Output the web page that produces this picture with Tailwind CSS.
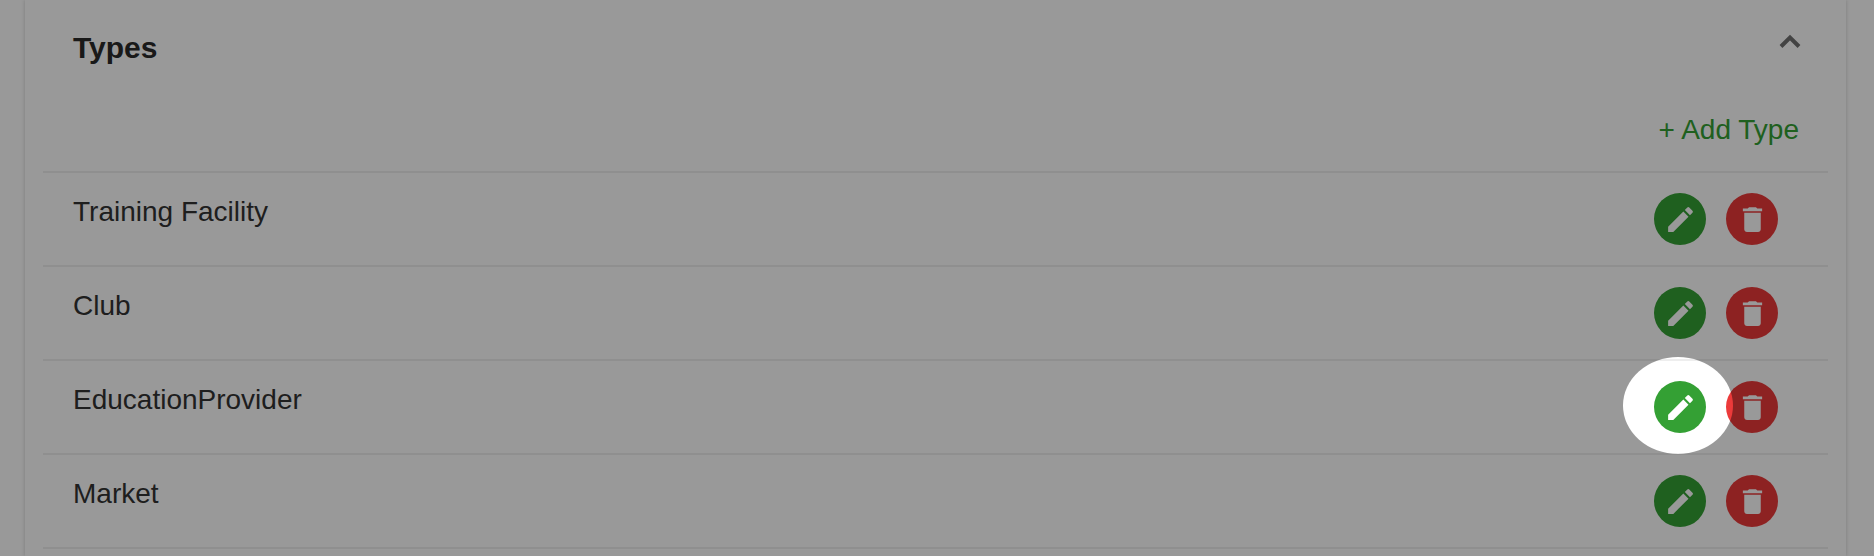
<!DOCTYPE html>
<html lang="en">

<head>
    <script src="https://cdn.jsdelivr.net/npm/@tailwindcss/browser@4"></script>
</head>

<body class="relative h-[556px] overflow-hidden bg-white font-['Liberation_Sans',sans-serif]">
    <div class="ml-[25px] mr-[28px] h-[556px] bg-white shadow-[0_0_4px_rgba(0,0,0,0.2)] pl-[18px] pr-[18px]">
        <div class="flex justify-between pl-[30px] pr-[27px] pt-[31px] h-[105px]">
            <h2 class="text-[30px] leading-[34px] font-bold text-[#2b2b2b]">Types</h2>
            <button class="h-[14px] mt-[3px] text-[#707070]">
                <svg class="block w-[22px] h-[14px]" viewBox="0 0 22 14" fill="none" stroke="currentColor" stroke-width="4"><path d="M2 12.5 11 3.5l9 9"/></svg>
            </button>
        </div>
        <div class="flex justify-end pr-[29px] h-[66px]">
            <a class="text-[#34a034] text-[28px] leading-[50px] h-[50px]">+ Add Type</a>
        </div>
        <div id="rows">
            <div class="flex justify-between h-[94px] border-t-2 border-[#eeeeee] pl-[30px] pr-[50px]">
                <span class="text-[28px] leading-[38px] pt-[20px] text-[#333]">Training Facility</span>
                <div class="flex gap-[20px] pt-[20px]">
                    <button class="w-[52px] h-[52px] rounded-full bg-[#34a034] flex items-center justify-center text-white">
                        <svg class="w-[33px] h-[33px]" viewBox="0 0 24 24" fill="currentColor"><path d="M3 17.25V21h3.75L17.81 9.94l-3.75-3.75L3 17.25zM20.71 7.04a1 1 0 0 0 0-1.41l-2.34-2.34a1 1 0 0 0-1.41 0l-1.83 1.83 3.75 3.75 1.83-1.83z"/></svg>
                    </button>
                    <button class="w-[52px] h-[52px] rounded-full bg-[#ec3a3a] flex items-center justify-center text-white">
                        <svg class="w-[33px] h-[33px]" viewBox="0 0 24 24" fill="currentColor"><path d="M6 19c0 1.1.9 2 2 2h8c1.1 0 2-.9 2-2V7H6v12zM19 4h-3.5l-1-1h-5l-1 1H5v2h14V4z"/></svg>
                    </button>
                </div>
            </div>
            <div class="flex justify-between h-[94px] border-t-2 border-[#eeeeee] pl-[30px] pr-[50px]">
                <span class="text-[28px] leading-[38px] pt-[20px] text-[#333]">Club</span>
                <div class="flex gap-[20px] pt-[20px]">
                    <button class="w-[52px] h-[52px] rounded-full bg-[#34a034] flex items-center justify-center text-white">
                        <svg class="w-[33px] h-[33px]" viewBox="0 0 24 24" fill="currentColor"><path d="M3 17.25V21h3.75L17.81 9.94l-3.75-3.75L3 17.25zM20.71 7.04a1 1 0 0 0 0-1.41l-2.34-2.34a1 1 0 0 0-1.41 0l-1.83 1.83 3.75 3.75 1.83-1.83z"/></svg>
                    </button>
                    <button class="w-[52px] h-[52px] rounded-full bg-[#ec3a3a] flex items-center justify-center text-white">
                        <svg class="w-[33px] h-[33px]" viewBox="0 0 24 24" fill="currentColor"><path d="M6 19c0 1.1.9 2 2 2h8c1.1 0 2-.9 2-2V7H6v12zM19 4h-3.5l-1-1h-5l-1 1H5v2h14V4z"/></svg>
                    </button>
                </div>
            </div>
            <div class="flex justify-between h-[94px] border-t-2 border-[#eeeeee] pl-[30px] pr-[50px]">
                <span class="text-[28px] leading-[38px] pt-[20px] text-[#333]">EducationProvider</span>
                <div class="flex gap-[20px] pt-[20px]">
                    <button class="w-[52px] h-[52px] rounded-full bg-[#34a034] flex items-center justify-center text-white">
                        <svg class="w-[33px] h-[33px]" viewBox="0 0 24 24" fill="currentColor"><path d="M3 17.25V21h3.75L17.81 9.94l-3.75-3.75L3 17.25zM20.71 7.04a1 1 0 0 0 0-1.41l-2.34-2.34a1 1 0 0 0-1.41 0l-1.83 1.83 3.75 3.75 1.83-1.83z"/></svg>
                    </button>
                    <button class="w-[52px] h-[52px] rounded-full bg-[#ec3a3a] flex items-center justify-center text-white">
                        <svg class="w-[33px] h-[33px]" viewBox="0 0 24 24" fill="currentColor"><path d="M6 19c0 1.1.9 2 2 2h8c1.1 0 2-.9 2-2V7H6v12zM19 4h-3.5l-1-1h-5l-1 1H5v2h14V4z"/></svg>
                    </button>
                </div>
            </div>
            <div class="flex justify-between h-[94px] border-t-2 border-[#eeeeee] pl-[30px] pr-[50px]">
                <span class="text-[28px] leading-[38px] pt-[20px] text-[#333]">Market</span>
                <div class="flex gap-[20px] pt-[20px]">
                    <button class="w-[52px] h-[52px] rounded-full bg-[#34a034] flex items-center justify-center text-white">
                        <svg class="w-[33px] h-[33px]" viewBox="0 0 24 24" fill="currentColor"><path d="M3 17.25V21h3.75L17.81 9.94l-3.75-3.75L3 17.25zM20.71 7.04a1 1 0 0 0 0-1.41l-2.34-2.34a1 1 0 0 0-1.41 0l-1.83 1.83 3.75 3.75 1.83-1.83z"/></svg>
                    </button>
                    <button class="w-[52px] h-[52px] rounded-full bg-[#ec3a3a] flex items-center justify-center text-white">
                        <svg class="w-[33px] h-[33px]" viewBox="0 0 24 24" fill="currentColor"><path d="M6 19c0 1.1.9 2 2 2h8c1.1 0 2-.9 2-2V7H6v12zM19 4h-3.5l-1-1h-5l-1 1H5v2h14V4z"/></svg>
                    </button>
                </div>
            </div>
            <div class="border-t-2 border-[#eeeeee]"></div>
        </div>
    </div>
    <!-- tour spotlight over the page -->
    <div class="absolute left-[1623px] top-[357px] w-[110px] h-[97px] rounded-[50%] shadow-[0_0_0_2400px_rgba(0,0,0,0.4)]"></div>
</body>

</html>
